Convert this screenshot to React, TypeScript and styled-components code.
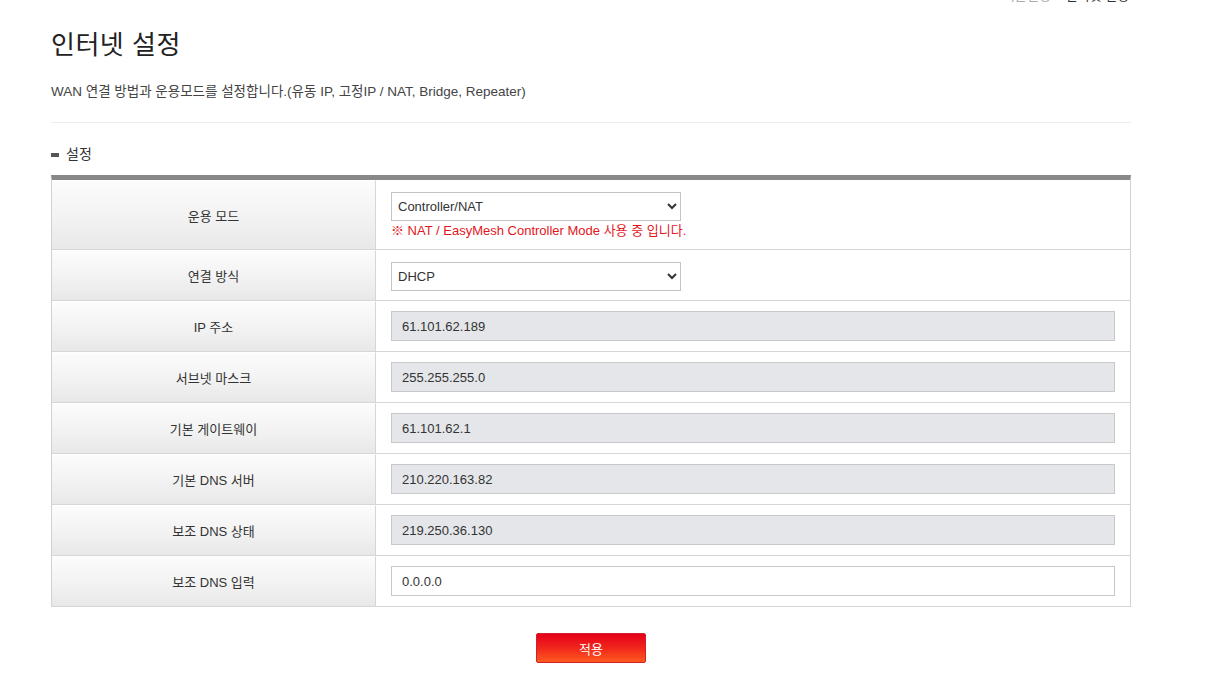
import React from "react";
import styled, { createGlobalStyle } from "styled-components";

const Global = createGlobalStyle`
  html, body { margin: 0; padding: 0; background: #fff; }
  body { font-family: "Liberation Sans", Arial, "Noto Sans CJK KR", sans-serif; color: #333; }
  * { box-sizing: border-box; }
`;

const Page = styled.div`
  width: 1080px;
  margin-left: 51px;
  padding-bottom: 40px;
`;

const Breadcrumb = styled.div`
  margin-top: -12px;
  height: 16px;
  text-align: right;
  padding-right: 2px;
  font-size: 13px;
  line-height: 16px;
  color: #aaa;
`;

const Crumb = styled.span<{ $current?: boolean }>`
  color: ${(p) => (p.$current ? "#333" : "#aaa")};
`;

const Title = styled.h1`
  margin: 26px 0 0;
  font-size: 26px;
  line-height: 31px;
  font-weight: 400;
  color: #222;
  letter-spacing: 0.5px;
`;

const Desc = styled.p`
  margin: 23px 0 0;
  font-size: 13.5px;
  line-height: 16px;
  color: #444;
`;

const Rule = styled.hr`
  margin: 22px 0 0;
  border: 0;
  border-top: 1px solid #ececec;
`;

const SectionHead = styled.h2`
  margin: 22px 0 0;
  display: flex;
  align-items: center;
  gap: 7px;
  font-size: 14px;
  line-height: 18px;
  font-weight: 400;
  color: #333;
`;

const Marker = styled.span`
  width: 8px;
  height: 4px;
  background: #555;
  margin-top: 2px;
`;

const Table = styled.div`
  margin-top: 12px;
  border-top: 5px solid #888;
  border-left: 1px solid #d2d2d2;
  border-right: 1px solid #d2d2d2;
  display: grid;
  grid-template-columns: 324px 1fr;
`;

const Label = styled.div<{ $tall?: boolean }>`
  min-height: ${(p) => (p.$tall ? 70 : 51)}px;
  display: flex;
  align-items: center;
  justify-content: center;
  font-size: 13px;
  color: #333;
  background: linear-gradient(to bottom, #fcfcfc 0%, #f3f3f3 50%, #e8e8e8 100%);
  border-bottom: 1px solid #d6d6d6;
  border-right: 1px solid #d6d6d6;
  border-top: 1px solid #fff;
`;

const Value = styled.div`
  display: flex;
  flex-direction: column;
  justify-content: center;
  padding: 0 15px;
  border-bottom: 1px solid #d6d6d6;
`;

const Select = styled.select`
  width: 290px;
  height: 29px;
  border: 1px solid #c4c4c4;
  border-radius: 0;
  background: #fff;
  color: #333;
  font-family: "Liberation Sans", Arial, sans-serif;
  font-size: 13px;
  padding: 0 2px;
  margin-top: 2px;
`;

const Note = styled.div`
  margin-top: 2px;
  font-size: 13px;
  line-height: 16px;
  color: #e3161d;
`;

const Field = styled.input<{ $readonly?: boolean }>`
  width: 100%;
  height: 30px;
  border: 1px solid #c8c8c8;
  background: ${(p) => (p.$readonly ? "#e4e6e9" : "#fff")};
  color: #333;
  font-family: "Liberation Sans", Arial, sans-serif;
  font-size: 13px;
  padding: 0 10px;
  outline: none;
`;

const Actions = styled.div`
  display: flex;
  justify-content: center;
  margin-top: 26px;
`;

const ApplyButton = styled.button`
  width: 110px;
  height: 30px;
  border: 1px solid #d0202a;
  border-radius: 2px;
  background: linear-gradient(to bottom, #e5001a 0%, #f1261c 50%, #ff5a1f 100%);
  color: #fff;
  font-family: "Liberation Sans", "Noto Sans CJK KR", sans-serif;
  font-size: 13px;
  cursor: pointer;
`;

const fields: { label: string; value: string; readonly: boolean }[] = [
  { label: "IP 주소", value: "61.101.62.189", readonly: true },
  { label: "서브넷 마스크", value: "255.255.255.0", readonly: true },
  { label: "기본 게이트웨이", value: "61.101.62.1", readonly: true },
  { label: "기본 DNS 서버", value: "210.220.163.82", readonly: true },
  { label: "보조 DNS 상태", value: "219.250.36.130", readonly: true },
  { label: "보조 DNS 입력", value: "0.0.0.0", readonly: false },
];

export default function App() {
  return (
    <Page>
      <Global />
      <Breadcrumb>
        <Crumb>■ Home &gt; 기본설정 &gt; </Crumb>
        <Crumb $current>인터넷 설정</Crumb>
      </Breadcrumb>
      <Title>인터넷 설정</Title>
      <Desc>WAN 연결 방법과 운용모드를 설정합니다.(유동 IP, 고정IP / NAT, Bridge, Repeater)</Desc>
      <Rule />
      <SectionHead>
        <Marker />
        설정
      </SectionHead>
      <Table>
        <Label $tall>운용 모드</Label>
        <Value>
          <Select defaultValue="nat">
            <option value="nat">Controller/NAT</option>
            <option value="bridge">Bridge</option>
            <option value="repeater">Repeater</option>
          </Select>
          <Note>※ NAT / EasyMesh Controller Mode 사용 중 입니다.</Note>
        </Value>
        <Label>연결 방식</Label>
        <Value>
          <Select defaultValue="dhcp">
            <option value="dhcp">DHCP</option>
            <option value="static">고정 IP</option>
          </Select>
        </Value>
        {fields.map((f) => (
          <React.Fragment key={f.label}>
            <Label>{f.label}</Label>
            <Value>
              <Field defaultValue={f.value} readOnly={f.readonly} $readonly={f.readonly} />
            </Value>
          </React.Fragment>
        ))}
      </Table>
      <Actions>
        <ApplyButton type="button">적용</ApplyButton>
      </Actions>
    </Page>
  );
}
